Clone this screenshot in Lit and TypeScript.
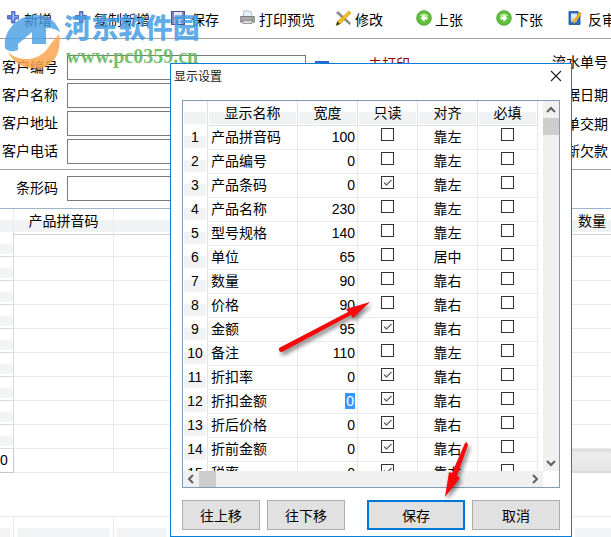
import { LitElement, html, css, svg } from "lit";
import { customElement } from "lit/decorators.js";

const plus = svg`<g transform="translate(0 1)"><path d="M4.500 0.500h3.500v4h4v3.500h-4v4h-3.500v-4h-4v-3.500h4z" fill="#5b7fd6" stroke="#3f5fb8" stroke-width="0.800"/><path d="M5.500 2h1.500v3.500h3.500v1h-3.500v3h-1.500z" fill="#9db8f0"/></g>`;
const floppy = svg`<rect x="0.500" y="1.500" width="13" height="13" fill="#7f86c8" stroke="#4a4f90"/><rect x="3" y="2" width="8" height="5" fill="#e6e8f4"/><rect x="3" y="9" width="8" height="5" fill="#c9cce6"/><rect x="5" y="10" width="2" height="4" fill="#4a4f90"/>`;
const printer = svg`<path d="M4 0.500l7 1 1 5H3z" fill="#e8f0f8" stroke="#9fb4c8" stroke-width="0.800"/><path d="M1 6.500h13c.6 0 1 .4 1 1v4.500H0v-4.500c0-.6.4-1 1-1z" fill="#a8a8a8" stroke="#6f6f6f" stroke-width="0.800"/><rect x="3" y="10.500" width="9" height="3" fill="#dcdcdc" stroke="#7c7c7c" stroke-width="0.700"/><circle cx="12.500" cy="8.500" r="0.900" fill="#5dbb4a"/>`;
const edit = svg`<path d="M1 3l2-2 13 12-1.500 2z" fill="#8d8d8d"/><path d="M14 1l2 2-11 11-4 1.500 1.500-4z" fill="#f2c21a" stroke="#b98a10" stroke-width="0.600"/><path d="M1 15.500l1.500-4 2.500 2.500z" fill="#333"/>`;
const goBack = svg`<circle cx="8" cy="8" r="7.300" fill="#62c13a" stroke="#3f9a2a" stroke-width="0.800"/><path d="M3.500 6a5 4 0 0 1 9 0z" fill="#b9ec9a"/><path d="M8.500 4L4.500 8l4 4V9.500h3v-3h-3z" fill="#fff"/>`;
const goNext = svg`<circle cx="8" cy="8" r="7.300" fill="#62c13a" stroke="#3f9a2a" stroke-width="0.800"/><path d="M3.500 6a5 4 0 0 1 9 0z" fill="#b9ec9a"/><path d="M7.500 4l4 4-4 4V9.500h-3v-3h3z" fill="#fff"/>`;
const audit = svg`<path d="M1 1.500h9l2 2v11H1z" fill="#2f6fc8" stroke="#1d4a90" stroke-width="0.800"/><rect x="3" y="3.500" width="6" height="8" fill="#dfeaf8"/><path d="M4 7l2 3 5-8 3 1-7 10H5z" fill="#f0b020"/>`;

const tools = [
  { icon: plus, w: 12, label: "新增", gap: 5, left: 0 },
  { icon: plus, w: 12, label: "复制新增", gap: 7, left: 23 },
  { icon: floppy, w: 14, label: "保存", gap: 6, left: 21 },
  { icon: printer, w: 15, label: "打印预览", gap: 4, left: 21 },
  { icon: edit, w: 16, label: "修改", gap: 4, left: 20 },
  { icon: goBack, w: 16, label: "上张", gap: 3, left: 33 },
  { icon: goNext, w: 16, label: "下张", gap: 3, left: 33 },
  { icon: audit, w: 15, label: "反审", gap: 5, left: 25 },
];

const fields = ["客户编号", "客户名称", "客户地址", "客户电话"];

const rows: [string, string, boolean, string][] = [
  ["产品拼音码", "100", false, "靠左"],
  ["产品编号", "0", false, "靠左"],
  ["产品条码", "0", true, "靠左"],
  ["产品名称", "230", false, "靠左"],
  ["型号规格", "140", false, "靠左"],
  ["单位", "65", false, "居中"],
  ["数量", "90", false, "靠右"],
  ["价格", "90", false, "靠右"],
  ["金额", "95", true, "靠右"],
  ["备注", "110", false, "靠左"],
  ["折扣率", "0", true, "靠右"],
  ["折扣金额", "0", true, "靠右"],
  ["折后价格", "0", true, "靠右"],
  ["折前金额", "0", true, "靠右"],
  ["税率", "0", true, "靠右"],
];

@customElement("app-root")
export class AppRoot extends LitElement {
  static styles = css`
    :host {
      display: block;
      position: relative;
      width: 611px;
      height: 537px;
      overflow: hidden;
      background: #fff;
      color: #000;
      font: 14px "Liberation Sans", "Noto Sans CJK SC", sans-serif;
    }
    .toolbar {
      display: flex;
      align-items: center;
      height: 39px;
      box-sizing: border-box;
      padding: 0 0 0 7px;
      border-bottom: 1px solid #a0a0a0;
      white-space: nowrap;
      overflow: hidden;
    }
    .tool { display: flex; align-items: center; flex: none; }
    .tool svg { flex: none; margin-top: -2px; }
    .form { display: flex; height: 131px; padding-top: 16px; box-sizing: border-box; border-bottom: 1px solid #a0a0a0; }
    .fields { display: flex; flex-direction: column; gap: 3px; flex: none; }
    .field { display: flex; align-items: center; gap: 9px; height: 25px; }
    .field label { width: 58px; text-align: right; flex: none; white-space: nowrap; line-height: 16px; padding-bottom: 1px; }
    .field .box { width: 239px; height: 25px; box-sizing: border-box; border: 1px solid #7a7a7a; flex: none; }
    .status { display: flex; align-items: flex-start; align-self: flex-start; gap: 39px; flex: none; }
    .tick { width: 14px; height: 10px; margin-top: 6px; background: #2566d0; flex: none; }
    .print { color: #8b0000; line-height: 16px; margin-top: 1px; flex: none; }
    .rights {
      display: grid;
      grid-template-rows: 33px 29px 27px 24px;
      justify-items: end;
      align-items: start;
      margin-top: -1px;
      flex: 1;
      padding-right: 3px;
      line-height: 16px;
      white-space: nowrap;
    }
    .barcode { padding: 6px 0 7px; }
    .sheet { border-top: 1px solid #9db4ca; }
    .srow { display: grid; grid-template-columns: 14px 100px 57px 1fr 39px; height: 24px; }
    .scell { border-right: 1px solid #ede9ea; border-bottom: 1px solid #ede9ea; box-sizing: border-box; text-align: center; line-height: 23px; }
    .scell:last-child { border-right: 0; padding-left: 1px; }
    .srow .rowhead { background: linear-gradient(#fff 46%, #f3f4f6 46%, #f3f4f6 92%, #fff 92%); border-color: #dcdcdc #d8d8d8; }
    .shead .scell { background: linear-gradient(#fff 46%, #f1f2f4 46%, #f1f2f4 92%, #fff 92%); border-bottom-color: #d2d2d2; line-height: 25px; }
    .total .rowhead { background: #fff; border-right-color: #c8c8c8; border-bottom-color: #c8c8c8; text-align: right; padding-right: 6px; overflow: hidden; }
    .total .sum { background: linear-gradient(#dedede, #eeeeee 20%, #e4e4e4); border-top: 1px solid #dcdcdc; border-bottom: 2px solid #dcdcdc; }
    .foot { margin-top: 43px; height: 22px; border-top: 1px solid #ede9ea; display: grid; grid-template-columns: 14px 100px 57px 1fr 39px; }
    .foot div { border-right: 1px solid #ede9ea; padding: 11px 3px 0; box-sizing: border-box; }
    .foot div:first-child { padding-left: 0; }
    .foot div:last-child { border-right: 0; padding-right: 0; }
    .foot i { display: block; height: 11px; background: #f3f4f6; }

    .mark { position: absolute; left: 0; top: 0; width: 210px; height: 80px; pointer-events: none; }
    .mark svg { position: absolute; left: 4px; top: 14px; }
    .mark b { position: absolute; white-space: nowrap; }
    .mark .cn { left: 64px; top: 9px; font: 900 27px/36px "Noto Sans CJK SC", sans-serif; color: rgba(70, 158, 228, 0.85); letter-spacing: 0.2px; }
    .mark .url { left: 66px; top: 46px; font: bold 20px/20px "Liberation Serif", serif; color: rgba(95, 185, 90, 0.9); }

    .dialog {
      position: absolute; left: 170px; top: 63px; width: 402px; height: 474px;
      box-sizing: border-box; border: 1px solid #0a7ed6; background: #fff;
      padding: 0 11px; display: flex; flex-direction: column;
    }
    .dtitle { height: 36px; flex: none; display: flex; justify-content: space-between; margin: 0 -2px 0 -8px; padding: 5px 0 0; box-sizing: border-box; font-size: 12px; line-height: 16px; color: #222; }
    .dtitle svg { margin-top: 1px; }
    .grid {
      flex: none; width: 378px; height: 388px; box-sizing: border-box;
      border: 1px solid #7f9db9; display: grid;
      grid-template-columns: 360px 16px; grid-template-rows: 370px 16px;
    }
    .view { overflow: hidden; }
    .trow { display: grid; grid-template-columns: 25px 90px 60px 60px 60px 60px; width: 355px; height: 24px; }
    .c { box-sizing: border-box; border-right: 1px solid #ece8e9; border-bottom: 1px solid #ece8e9; text-align: center; line-height: 24px; position: relative; }
    .head .c { border-color: #dfe0e2; background: linear-gradient(#fff 46%, #f1f2f4 46%, #f1f2f4 96%, #fff 96%); box-shadow: inset 1px 0 #fff, inset -1px 0 #fff; line-height: 24px; }
    .c.n { background: linear-gradient(#fff 46%, #f1f2f4 46%, #f1f2f4 96%, #fff 96%); box-shadow: inset 0 0 0 1px #fff; border-color: #e3e3e3; }
    .c.name { text-align: left; padding-left: 3px; white-space: nowrap; }
    .c.num { text-align: right; padding-right: 2px; }
    .c.num span { background: #3399ff; color: #fff; padding: 0 1px; display: inline-block; line-height: 16px; }
    .c.chk { display: flex; justify-content: center; padding-top: 3px; }
    .cb { width: 13px; height: 13px; box-sizing: border-box; border: 1px solid #333; display: block; }
    .cb svg { display: block; }
    .vbar { background: #f0f0f0; display: flex; flex-direction: column; align-items: center; }
    .arrow { height: 17px; width: 16px; flex: none; display: flex; align-items: center; justify-content: center; }
    .thumb-v { height: 17px; width: 16px; background: #cdcdcd; flex: none; }
    .spacer { flex: 1; }
    .hbar { background: #f0f0f0; display: flex; align-items: center; }
    .thumb-h { width: 17px; height: 16px; background: #cdcdcd; flex: none; }
    .actions { flex: none; display: flex; margin-top: 12px; height: 30px; }
    button {
      font: inherit; color: #000; background: #e1e1e1; border: 1px solid #adadad; border-radius: 0; padding: 0; height: 30px; box-sizing: border-box; flex: none;
    }
    .move { width: 78px; margin-right: 7px; }
    .primary { width: 98px; border: 2px solid #0078d7; margin: 0 7px 0 15px; }
    .cancel { width: 88px; }
    .arrows { position: absolute; left: 0; top: 0; pointer-events: none; filter: drop-shadow(2px 3px 2px rgba(0, 0, 0, 0.5)); }
  `;

  private check() {
    return html`<span class="cb"><svg width="11" height="11" viewBox="0 0 11 11"><path d="M2 5.500l2.500 2.500 5-5" fill="none" stroke="#6a6a6a" stroke-width="1.300"/></svg></span>`;
  }
  private box() {
    return html`<span class="cb"></span>`;
  }
  private chev(d: string) {
    return svg`<svg width="10" height="10" viewBox="0 0 10 10"><path d=${d} fill="none" stroke="#606060" stroke-width="2"/></svg>`;
  }

  render() {
    return html`
      <div class="toolbar">
        ${tools.map((t) => html`<div class="tool" style="margin-left:${t.left}px;gap:${t.gap}px">
          <svg width=${t.w} height="16" viewBox="0 0 ${t.w} 16">${t.icon}</svg><span>${t.label}</span>
        </div>`)}
      </div>
      <div class="form">
        <div class="fields">
          ${fields.map((f, i) => html`<div class="field"><label>${f}</label><div class="box"></div>
          ${i === 0 ? html`<div class="status"><div class="tick"></div><div class="print">未打印</div></div>` : ""}</div>`)}
        </div>
        <div class="rights"><span>流水单号</span><span>单据日期</span><span>订单交期</span><span>最新欠款</span></div>
      </div>
      <div class="barcode"><div class="field"><label>条形码</label><div class="box"></div></div></div>
      <div class="sheet">
        <div class="srow shead"><div class="scell"></div><div class="scell">产品拼音码</div><div class="scell"></div><div class="scell"></div><div class="scell">数量</div></div>
        ${Array.from({ length: 9 }).map(() => html`<div class="srow"><div class="scell rowhead"></div><div class="scell"></div><div class="scell"></div><div class="scell"></div><div class="scell"></div></div>`)}
        <div class="srow total"><div class="scell rowhead">0</div><div class="scell"></div><div class="scell"></div><div class="scell"></div><div class="scell sum"></div></div>
        <div class="foot"><div><i></i></div><div><i></i></div><div><i></i></div><div><i></i></div><div><i></i></div></div>
      </div>

      <div class="mark">
        <svg width="58" height="58" viewBox="0 0 58 58">
          <path d="M1 34C-1 16 14 2 30 1 42 0 52 6 56 18 50 14 46 14 42 14V30H28V18L14 30V36C8 38 4 38 1 34z" fill="rgba(70,158,228,.8)"/>
          <path d="M4 38C14 48 34 48 44 34 48 28 52 24 55 20 58 38 50 52 36 54 22 56 10 50 4 38z" fill="rgba(250,165,80,.85)"/>
        </svg>
        <b class="cn">河东软件园</b>
        <b class="url">www.pc0359.cn</b>
      </div>

      <div class="dialog">
        <div class="dtitle"><span>显示设置</span>
          <svg width="12" height="12" viewBox="0 0 12 12"><path d="M1 1l10 10M11 1L1 11" stroke="#222" stroke-width="1.100" fill="none"/></svg>
        </div>
        <div class="grid">
          <div class="view">
            <div class="trow head"><div class="c"></div><div class="c">显示名称</div><div class="c">宽度</div><div class="c">只读</div><div class="c">对齐</div><div class="c">必填</div></div>
            ${rows.map((r, i) => html`<div class="trow">
              <div class="c n">${i + 1}</div>
              <div class="c name">${r[0]}</div>
              <div class="c num">${i === 11 ? html`<span>${r[1]}</span>` : r[1]}</div>
              <div class="c chk">${r[2] ? this.check() : this.box()}</div>
              <div class="c">${r[3]}</div>
              <div class="c chk">${this.box()}</div>
            </div>`)}
          </div>
          <div class="vbar">
            <div class="arrow">${this.chev("M1 7l4-4 4 4")}</div>
            <div class="thumb-v"></div>
            <div class="spacer"></div>
            <div class="arrow">${this.chev("M1 3l4 4 4-4")}</div>
          </div>
          <div class="hbar">
            <div class="arrow">${this.chev("M7 1L3 5l4 4")}</div>
            <div class="thumb-h"></div>
            <div class="spacer"></div>
            <div class="arrow">${this.chev("M3 1l4 4-4 4")}</div>
          </div>
          <div></div>
        </div>
        <div class="actions">
          <button class="move">往上移</button>
          <button class="move">往下移</button>
          <button class="primary">保存</button>
          <button class="cancel">取消</button>
        </div>
      </div>

      <svg class="arrows" width="611" height="537" viewBox="0 0 611 537">
        <path d="M279 348L348 312 346 309 370 302 353 318 351 315 282 352Q278 352 279 348z" fill="#f40a0a"/>
        <path d="M465 443L452 473 449 472 445 497 460 478 457 476 468 445Q467 441 465 443z" fill="#f40a0a"/>
      </svg>
    `;
  }
}
